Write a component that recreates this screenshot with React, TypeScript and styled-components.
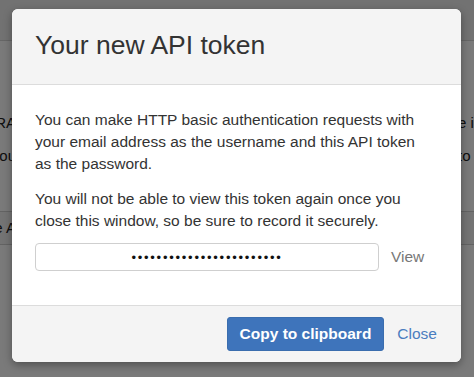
import React from "react";
import styled, { createGlobalStyle } from "styled-components";

const GlobalStyle = createGlobalStyle`
  html, body {
    margin: 0;
    padding: 0;
    overflow: hidden;
  }
  body {
    font-family: "Liberation Sans", Arial, Helvetica, sans-serif;
    color: #333;
  }
`;

// page that sits behind the backdrop
const Page = styled.div`
  position: relative;
  width: 474px;
  height: 377px;
  overflow: hidden;
  background: #fff;
`;

const PageHeader = styled.div`
  height: 40px;
  background: #eeeeee;
  border-bottom: 1px solid #d6d6d6;
`;

const PageBody = styled.div`
  padding-top: 65px;
`;

const PageRow = styled.div<{ $band?: boolean }>`
  display: flex;
  justify-content: space-between;
  height: ${({ $band }) => ($band ? "32px" : "33px")};
  line-height: ${({ $band }) => ($band ? "32px" : "33px")};
  font-size: 15px;
  color: #222;
  background: ${({ $band }) => ($band ? "#f3f3f3" : "transparent")};
  border-top: ${({ $band }) => ($band ? "1px solid #d0d0d0" : "none")};
  border-bottom: ${({ $band }) => ($band ? "1px solid #d0d0d0" : "none")};
  margin-top: ${({ $band }) => ($band ? "39px" : "0")};
`;

const EdgeText = styled.span<{ $side: "left" | "right" }>`
  display: block;
  width: 16px;
  overflow: hidden;
  white-space: nowrap;
  direction: ${({ $side }) => ($side === "left" ? "rtl" : "ltr")};
  padding-left: ${({ $side }) => ($side === "right" ? "2px" : "0")};
`;

const Backdrop = styled.div`
  position: absolute;
  inset: 0;
  background: rgba(0, 0, 0, 0.52);
`;

const Modal = styled.div`
  position: absolute;
  top: 9px;
  left: 12px;
  width: 449px;
  background: #fff;
  border-radius: 6px;
  box-shadow: 0 3px 9px rgba(0, 0, 0, 0.35);
  display: flex;
  flex-direction: column;
`;

const ModalHeader = styled.div`
  background: #f4f4f4;
  border-bottom: 1px solid #dcdcdc;
  border-radius: 6px 6px 0 0;
  padding: 22px 23px 24px;
`;

const Title = styled.h3`
  margin: 0;
  font-size: 26.5px;
  line-height: 29px;
  font-weight: 400;
  color: #333;
`;

const ModalBody = styled.div`
  padding: 24px 26px 34px 23px;
`;

const Paragraph = styled.p<{ $gap: number }>`
  margin: 0 0 ${({ $gap }) => $gap}px;
  font-size: 15.5px;
  line-height: 22px;
  color: #333;
`;

const TokenRow = styled.div`
  display: flex;
  align-items: center;
  gap: 12px;
`;

const TokenInput = styled.input`
  box-sizing: border-box;
  width: 344px;
  height: 28px;
  border: 1px solid #cfcfcf;
  border-radius: 4px;
  background: #fff;
  text-align: center;
  font-family: "Liberation Sans", Arial, sans-serif;
  font-size: 13px;
  letter-spacing: 1.75px;
  color: #111;
  outline: none;
  padding: 0 8px;
`;

const ViewLink = styled.span`
  font-size: 15.5px;
  color: #777;
  cursor: pointer;
`;

const ModalFooter = styled.div`
  display: flex;
  justify-content: flex-end;
  align-items: center;
  gap: 13px;
  background: #f4f4f4;
  border-top: 1px solid #dcdcdc;
  border-radius: 0 0 6px 6px;
  padding: 11px 24px;
`;

const PrimaryButton = styled.button`
  height: 34px;
  padding: 0 12px;
  border: 1px solid #3a6dae;
  border-radius: 3px;
  background: #3e74bb;
  color: #fff;
  font-family: "Liberation Sans", Arial, sans-serif;
  font-size: 15.5px;
  font-weight: 700;
  cursor: pointer;
`;

const TextLink = styled.a`
  font-size: 15.5px;
  color: #4a7dbf;
  text-decoration: none;
  cursor: pointer;
`;

export default function App() {
  return (
    <>
      <GlobalStyle />
      <Page>
        <PageHeader />
        <PageBody>
          <PageRow>
            <EdgeText $side="left">JIRA</EdgeText>
            <EdgeText $side="right">e in</EdgeText>
          </PageRow>
          <PageRow>
            <EdgeText $side="left">you</EdgeText>
            <EdgeText $side="right">to</EdgeText>
          </PageRow>
          <PageRow $band>
            <EdgeText $side="left">e A</EdgeText>
            <EdgeText $side="right"> </EdgeText>
          </PageRow>
        </PageBody>
        <Backdrop />
        <Modal role="dialog" aria-labelledby="token-title">
          <ModalHeader>
            <Title id="token-title">Your new API token</Title>
          </ModalHeader>
          <ModalBody>
            <Paragraph $gap={13}>
              You can make HTTP basic authentication requests with your email
              address as the username and this API token as the password.
            </Paragraph>
            <Paragraph $gap={11}>
              You will not be able to view this token again once you close this
              window, so be sure to record it securely.
            </Paragraph>
            <TokenRow>
              <TokenInput
                type="password"
                readOnly
                value="abcdefghijklmnopqrstuvwx"
              />
              <ViewLink>View</ViewLink>
            </TokenRow>
          </ModalBody>
          <ModalFooter>
            <PrimaryButton>Copy to clipboard</PrimaryButton>
            <TextLink>Close</TextLink>
          </ModalFooter>
        </Modal>
      </Page>
    </>
  );
}
